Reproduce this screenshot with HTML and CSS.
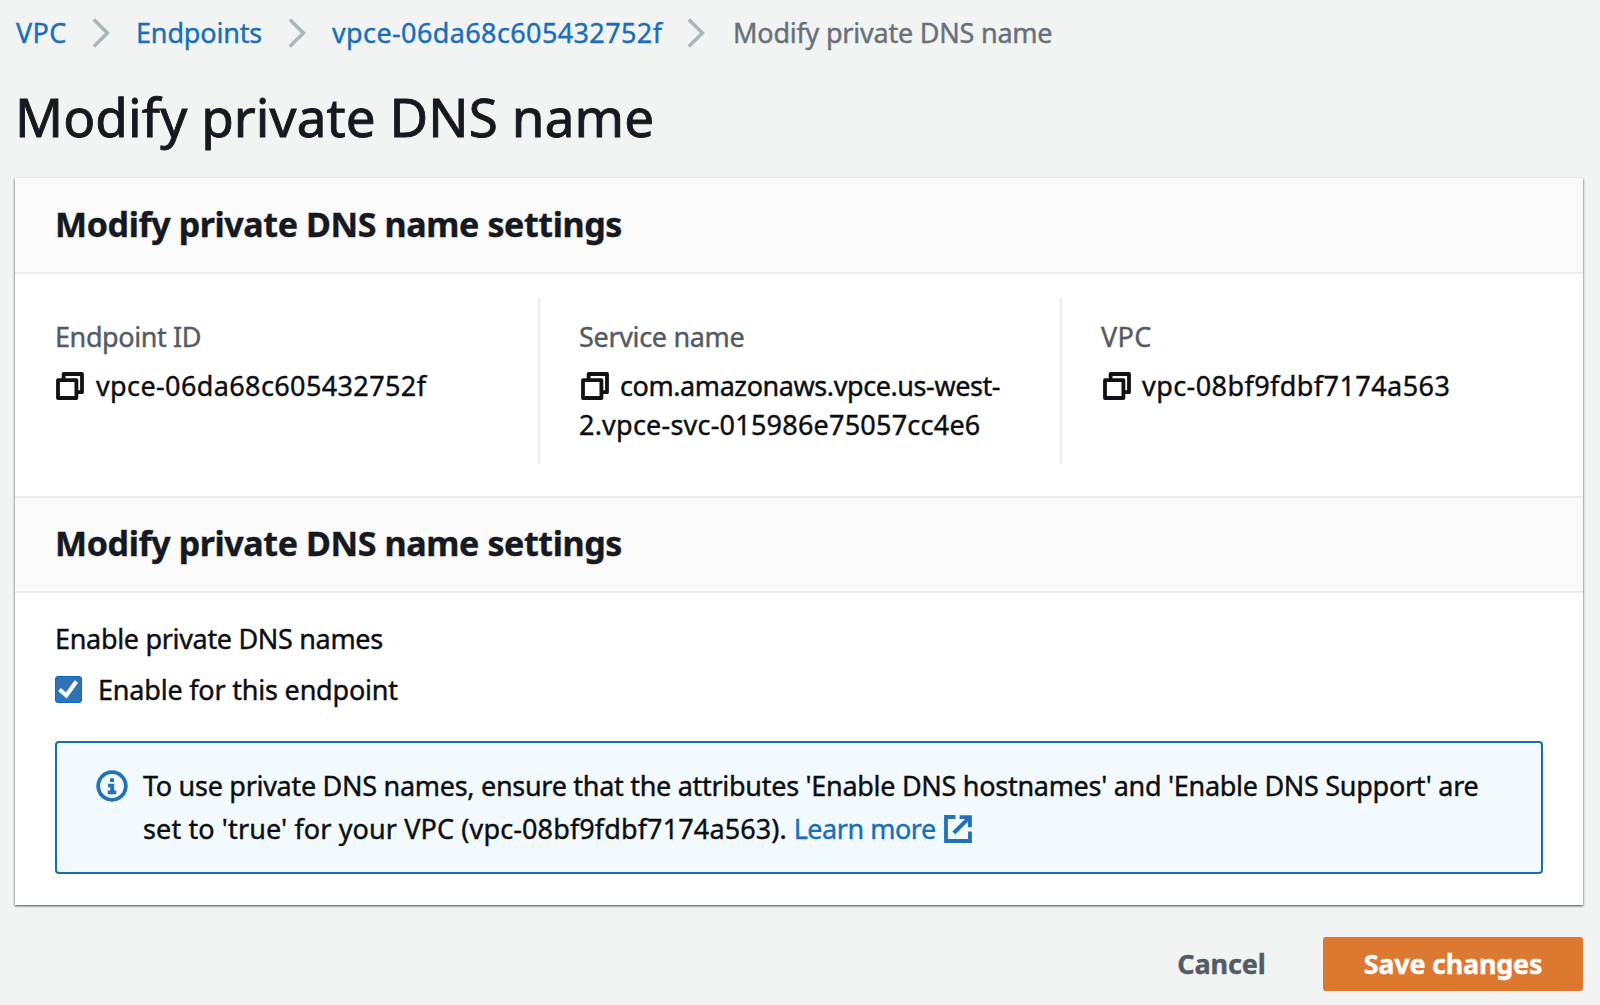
FILE: index.html
```html
<!DOCTYPE html>
<html lang="en">
<head>
<meta charset="utf-8">
<title>Modify private DNS name</title>
<link rel="stylesheet" href="styles.css">
</head>
<body>
<svg class="defs" aria-hidden="true">
  <symbol id="chevron" viewBox="0 0 18 30"><path d="M1.8 1.4 15.4 15 1.8 28.6" fill="none" stroke="#aab7b8" stroke-width="3.6"/></symbol>
  <symbol id="copy" viewBox="0 0 28 28"><path d="M7.6 7.5V2H26v18.2h-5.4M2 8.2h18.4V26H2z" fill="none" stroke="#111217" stroke-width="3.8" stroke-linejoin="round"/></symbol>
</svg>
<nav class="crumbs">
  <a class="crumb crumb-vpc">VPC</a>
  <svg class="chevron"><use href="#chevron"/></svg>
  <a class="crumb crumb-endpoints">Endpoints</a>
  <svg class="chevron"><use href="#chevron"/></svg>
  <a class="crumb crumb-id">vpce-06da68c605432752f</a>
  <svg class="chevron"><use href="#chevron"/></svg>
  <span class="crumb crumb-current">Modify private DNS name</span>
</nav>
<h1 class="title">Modify private DNS name</h1>
<main class="panel">
  <header class="panel-header"><h2 class="heading">Modify private DNS name settings</h2></header>
  <section class="details">
    <div class="column">
      <div class="label label-id">Endpoint ID</div>
      <div class="value value-id"><svg class="copy"><use href="#copy"/></svg>vpce-06da68c605432752f</div>
    </div>
    <div class="column">
      <div class="label label-service">Service name</div>
      <div class="value"><span class="service-host"><svg class="copy"><use href="#copy"/></svg>com.amazonaws.vpce.us-west-</span><br><span class="service-id">2.vpce-svc-015986e75057cc4e6</span></div>
    </div>
    <div class="column">
      <div class="label label-vpc">VPC</div>
      <div class="value value-vpc"><svg class="copy"><use href="#copy"/></svg>vpc-08bf9fdbf7174a563</div>
    </div>
  </section>
  <header class="panel-header panel-header-second"><h2 class="heading">Modify private DNS name settings</h2></header>
  <section class="settings">
    <div class="field-label">Enable private DNS names</div>
    <label class="check-row">
      <svg class="checkbox" viewBox="0 0 27 27"><rect x=".5" y=".5" width="26" height="26" rx="2.5" fill="#2e73b8" stroke="#0a67b5"/><path d="M4.5 13.5 11.3 19.4 21.4 5.4" fill="none" stroke="#fff" stroke-width="4.2"/></svg>
      <span>Enable for this endpoint</span>
    </label>
    <div class="alert">
      <svg class="info" viewBox="0 0 32 32"><circle cx="16" cy="16" r="13.8" fill="none" stroke="#2471b8" stroke-width="3.8"/><path d="M14 8.3h4v3.6h-4zM12 13.8h6.2v6.8h2v3.6h-8.4v-3.6h2.4v-3.4H12z" fill="#2471b8"/></svg>
      <p class="alert-text">To use private DNS names, ensure that the attributes 'Enable DNS hostnames' and 'Enable DNS Support' are<br><span class="alert-second">set to 'true' for your VPC (vpc-08bf9fdbf7174a563).</span> <a class="learn">Learn more<svg class="external" viewBox="0 0 28 28"><path d="M11.5 2H2v24h24V16.5" fill="none" stroke="#2471b8" stroke-width="3.8"/><path d="M9.8 18 24 3.8" fill="none" stroke="#2471b8" stroke-width="4"/><path d="M15.6.2H27.9v12H24V4h-8.4z" fill="#2471b8"/></svg></a></p>
    </div>
  </section>
</main>
<footer class="actions">
  <button class="button cancel">Cancel</button>
  <button class="button save">Save changes</button>
</footer>
</body>
</html>
```
FILE: styles.css
```css
* { box-sizing: border-box; }
body {
  margin: 0;
  padding: 12px 17px 0 15px;
  height: 1005px;
  overflow: hidden;
  background: #f2f4f3;
  color: #0d0e12;
  font: 27px/40px "Noto Sans", sans-serif;
  -webkit-text-stroke: .4px currentColor;
}
.defs { position: absolute; width: 0; height: 0; }
.crumbs { display: flex; align-items: center; height: 42px; padding-left: 1px; white-space: nowrap; }
.crumb { color: #1a6fb8; }
.crumb-vpc { width: 76px; letter-spacing: .4px; }
.crumb-endpoints { width: 152px; margin-left: 1px; letter-spacing: -.16px; }
.crumb-id { width: 355px; margin-left: 1px; letter-spacing: .38px; }
.crumb-current { margin-left: 3px; color: #687078; letter-spacing: -.22px; }
.chevron { flex: none; width: 18px; height: 30px; margin-right: 25px; }
.title {
  margin: 30px 0 28px;
  color: #16191f;
  font-size: 53px;
  font-weight: 400;
  line-height: 66px;
  letter-spacing: .1px;
  -webkit-text-stroke-width: .9px;
}
.panel {
  height: 727px;
  background: #fff;
  box-shadow: 0 1px 2px 0 rgba(0, 28, 36, .6), 1px 1px 2px 0 rgba(0, 28, 36, .15), -1px 1px 2px 0 rgba(0, 28, 36, .15);
}
.panel-header {
  padding: 25px 40px 27px;
  background: #fafafa;
  border-bottom: 2px solid #eaeded;
}
.panel-header-second { padding-top: 24px; border-top: 2px solid #eaeded; }
.heading {
  margin: 0;
  color: #16191f;
  font-size: 34px;
  font-weight: 700;
  line-height: 42px;
  letter-spacing: -.39px;
}
.details { display: grid; grid-template-columns: 523px 522px 1fr; padding: 24px 0 32px; }
.column { height: 166px; padding: 19px 0 0 39px; }
.column:first-child { padding-left: 40px; }
.column + .column { border-left: 2px solid #eaeded; }
.label { margin-bottom: 9px; color: #545b64; }
.label-id { letter-spacing: -.4px; }
.label-service { letter-spacing: -.33px; }
.label-vpc { letter-spacing: .4px; }
.value { line-height: 39.4px; white-space: nowrap; }
.value-id { letter-spacing: .38px; }
.value-vpc { letter-spacing: .43px; }
.service-host { letter-spacing: -.42px; }
.service-id { letter-spacing: .22px; }
.copy { width: 28px; height: 28px; margin: 0 11px 0 2px; vertical-align: -4px; }
.column:first-child .copy { margin: 0 12px 0 1px; }
.settings { padding: 26px 40px 0; }
.field-label { letter-spacing: -.32px; }
.check-row { display: flex; align-items: center; gap: 16px; margin: 11px 0 31px; letter-spacing: -.2px; }
.checkbox { width: 27px; height: 27px; margin-top: -1px; }
.alert {
  display: flex;
  height: 133px;
  padding: 21px 0 0 39px;
  border: 2px solid #1a6bb5;
  border-radius: 4px;
  background: #f2fafd;
}
.info { flex: none; width: 32px; height: 32px; margin: 6px 15px 0 0; }
.alert-text { margin: 0; line-height: 43px; letter-spacing: -.29px; white-space: nowrap; }
.alert-second { letter-spacing: .12px; }
.learn { color: #1a6fb8; letter-spacing: -.48px; }
.external { width: 28px; height: 28px; margin-left: 8px; vertical-align: -4px; }
.actions { display: flex; justify-content: flex-end; padding: 32px 0 0; }
.button {
  height: 54px;
  padding: 0;
  border: 0;
  background: none;
  font: 700 27px/40px "Noto Sans", sans-serif;
}
.cancel { width: 200px; padding-right: 3px; color: #545b64; letter-spacing: -.15px; }
.save { width: 260px; border-radius: 3px; background: #dd7831; color: #fff; letter-spacing: -.25px; }
```
